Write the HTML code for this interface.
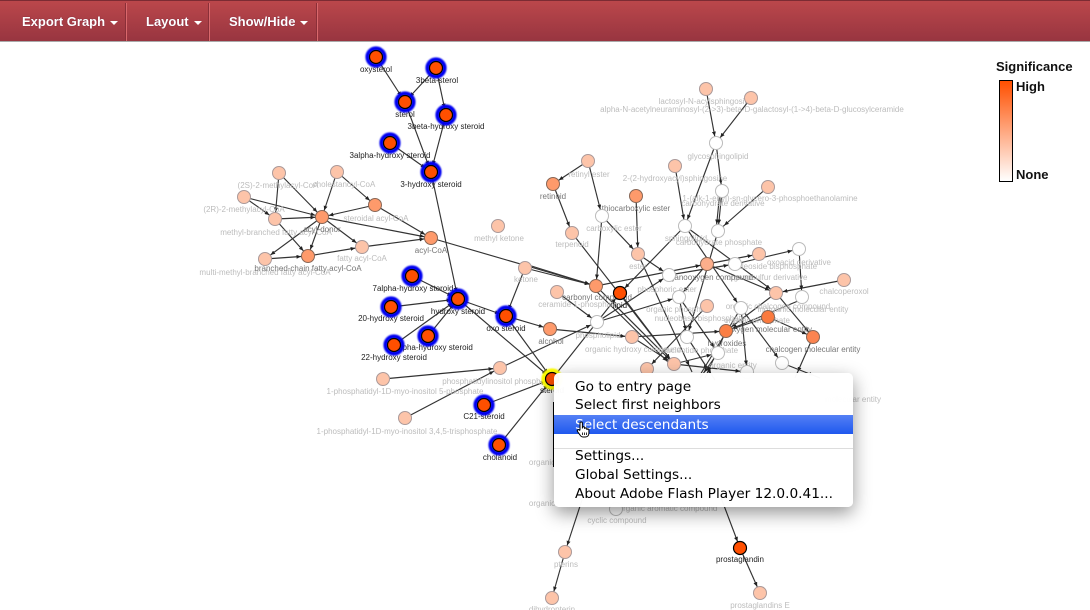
<!DOCTYPE html>
<html lang="en"><head><meta charset="utf-8"><title>Graph</title>
<style>
html,body{margin:0;padding:0;background:#fff;width:1090px;height:610px;overflow:hidden;font-family:"Liberation Sans",sans-serif}
#bar{position:absolute;left:0;top:0;width:1090px;background:linear-gradient(#bb474b,#983540);border-top:1px solid #7c2b33;border-bottom:1px solid #aaa;box-sizing:border-box;height:42px}
.sep{position:absolute;top:2px;height:38px;width:1px;background:#d9686c;box-shadow:-1px 0 0 #8a2f38}
.btn{position:absolute;top:13px;color:#fff;font-weight:bold;font-size:13px;line-height:15px;white-space:nowrap;text-shadow:0 0 1px rgba(60,0,60,.6)}
.car{display:inline-block;width:0;height:0;border-left:4.5px solid transparent;border-right:4.5px solid transparent;border-top:4px solid #fff;margin-left:5px;vertical-align:1px}
svg{position:absolute;left:0;top:0}
svg text{font-family:"Liberation Sans",sans-serif;font-size:8px;text-anchor:middle}
.l text{fill:#bcbcbc}.m text{fill:#777}.d text{fill:#222}
.e line{stroke:#333;stroke-width:1.15;marker-end:url(#a)}
.n circle{fill:#fdc4a9;stroke:#a99;stroke-width:1}
.w circle{fill:#fff;stroke:#bbb;stroke-width:1}
.o circle{fill:#fe9a6b;stroke:#865;stroke-width:1}
.b circle{fill:#ff4f00;stroke:#000;stroke-width:1.2}
.h circle{fill:none;stroke:#0000f0;stroke-width:4.2;filter:blur(.7px)}
#leg{position:absolute;left:999px;top:80px;width:12px;height:100px;border:1px solid #000;background:linear-gradient(#ff4f00,#fff)}
.lt{position:absolute;font-weight:bold;font-size:13px;line-height:15px;color:#111;white-space:nowrap}
#menu{position:absolute;left:554px;top:373px;width:299px;height:134px;background:rgba(255,255,255,.975);border-radius:5px;box-shadow:0 6px 18px rgba(0,0,0,.42);font-family:"DejaVu Sans",sans-serif;font-size:13.7px;color:#000}
#menu div.i{position:absolute;left:21px;white-space:nowrap;line-height:19px}
#hl{position:absolute;left:0;top:42px;width:299px;height:19px;background:linear-gradient(#5480f5,#1f58ee)}
#ln{position:absolute;left:0;top:75px;width:299px;height:1px;background:#ddd}
#blk{position:absolute;left:553px;top:402px;width:1px;height:65px;background:#000}
</style></head><body>
<svg width="1090" height="610" viewBox="0 0 1090 610">
<defs><marker id="a" markerWidth="5" markerHeight="4" refX="11.500" refY="2" orient="auto" markerUnits="userSpaceOnUse"><path d="M0 0L4.500 2L0 4z" fill="#222"/></marker></defs>
<g class="e">
<line x1="376" y1="57" x2="405" y2="102"/><line x1="436" y1="68" x2="405" y2="102"/><line x1="436" y1="68" x2="446" y2="115"/><line x1="446" y1="115" x2="431" y2="172"/><line x1="390" y1="143" x2="431" y2="172"/><line x1="405" y1="102" x2="431" y2="172"/><line x1="431" y1="172" x2="458" y2="299"/>
<line x1="412" y1="276" x2="458" y2="299"/><line x1="391" y1="307" x2="458" y2="299"/><line x1="394" y1="345" x2="458" y2="299"/><line x1="428" y1="336" x2="458" y2="299"/><line x1="458" y1="299" x2="506" y2="316"/><line x1="458" y1="299" x2="552" y2="379"/><line x1="506" y1="316" x2="552" y2="379"/><line x1="506" y1="316" x2="550" y2="329"/><line x1="484" y1="405" x2="552" y2="379"/><line x1="499" y1="445" x2="552" y2="379"/><line x1="552" y1="379" x2="620" y2="293"/><line x1="525" y1="268" x2="506" y2="316"/><line x1="550" y1="329" x2="632" y2="337"/>
<line x1="383" y1="379" x2="500" y2="368"/><line x1="405" y1="418" x2="500" y2="368"/><line x1="500" y1="368" x2="597" y2="322"/>
<line x1="279" y1="173" x2="275" y2="219"/><line x1="279" y1="173" x2="322" y2="217"/><line x1="337" y1="172" x2="322" y2="217"/><line x1="337" y1="172" x2="375" y2="205"/><line x1="244" y1="197" x2="322" y2="217"/><line x1="244" y1="197" x2="275" y2="219"/><line x1="275" y1="219" x2="322" y2="217"/><line x1="275" y1="219" x2="308" y2="256"/><line x1="375" y1="205" x2="322" y2="217"/><line x1="375" y1="205" x2="431" y2="238"/><line x1="322" y1="217" x2="431" y2="238"/><line x1="322" y1="217" x2="362" y2="247"/><line x1="322" y1="217" x2="308" y2="256"/><line x1="322" y1="217" x2="265" y2="259"/><line x1="265" y1="259" x2="308" y2="256"/><line x1="308" y1="256" x2="362" y2="247"/><line x1="362" y1="247" x2="431" y2="238"/>
<line x1="431" y1="238" x2="596" y2="286"/><line x1="525" y1="264" x2="596" y2="286"/><line x1="525" y1="268" x2="596" y2="286"/>
<line x1="706" y1="89" x2="716" y2="143"/><line x1="751" y1="98" x2="716" y2="143"/><line x1="716" y1="143" x2="685" y2="226"/><line x1="716" y1="143" x2="722" y2="191"/><line x1="675" y1="166" x2="685" y2="226"/><line x1="722" y1="191" x2="718" y2="231"/><line x1="720" y1="191" x2="716" y2="231"/><line x1="768" y1="187" x2="719" y2="230"/>
<line x1="588" y1="161" x2="553" y2="184"/><line x1="588" y1="161" x2="602" y2="216"/><line x1="553" y1="184" x2="572" y2="233"/><line x1="602" y1="216" x2="596" y2="286"/><line x1="602" y1="216" x2="638" y2="254"/><line x1="636" y1="196" x2="638" y2="254"/>
<line x1="572" y1="233" x2="674" y2="364"/><line x1="596" y1="286" x2="707" y2="264"/><line x1="596" y1="286" x2="674" y2="364"/><line x1="593" y1="288" x2="672" y2="366"/><line x1="620" y1="293" x2="674" y2="364"/><line x1="685" y1="226" x2="620" y2="293"/><line x1="557" y1="292" x2="597" y2="322"/><line x1="597" y1="322" x2="669" y2="275"/><line x1="597" y1="322" x2="679" y2="297"/><line x1="638" y1="254" x2="669" y2="275"/><line x1="638" y1="254" x2="692" y2="372"/><line x1="632" y1="337" x2="674" y2="364"/><line x1="632" y1="337" x2="726" y2="331"/>
<line x1="685" y1="226" x2="776" y2="293"/><line x1="685" y1="226" x2="741" y2="308"/><line x1="718" y1="231" x2="687" y2="337"/><line x1="707" y1="264" x2="776" y2="293"/><line x1="735" y1="264" x2="799" y2="249"/><line x1="707" y1="264" x2="759" y2="254"/><line x1="844" y1="280" x2="776" y2="293"/><line x1="799" y1="249" x2="802" y2="297"/><line x1="776" y1="293" x2="813" y2="337"/><line x1="776" y1="293" x2="726" y2="331"/><line x1="798" y1="301" x2="726" y2="331"/><line x1="768" y1="317" x2="726" y2="331"/><line x1="768" y1="317" x2="813" y2="337"/><line x1="741" y1="308" x2="782" y2="363"/><line x1="741" y1="308" x2="700" y2="375"/><line x1="679" y1="297" x2="687" y2="337"/><line x1="707" y1="306" x2="647" y2="369"/><line x1="679" y1="297" x2="718" y2="353"/><line x1="707" y1="264" x2="679" y2="297"/><line x1="669" y1="275" x2="735" y2="264"/><line x1="687" y1="337" x2="715" y2="380"/><line x1="674" y1="364" x2="718" y2="353"/><line x1="674" y1="364" x2="747" y2="372"/><line x1="813" y1="337" x2="795" y2="378"/><line x1="782" y1="363" x2="820" y2="378"/><line x1="741" y1="308" x2="747" y2="372"/><line x1="726" y1="331" x2="705" y2="378"/><line x1="718" y1="353" x2="700" y2="378"/>
<line x1="582" y1="500" x2="565" y2="552"/><line x1="565" y1="552" x2="552" y2="598"/><line x1="720" y1="495" x2="740" y2="548"/><line x1="740" y1="548" x2="760" y2="593"/>
</g>
<g class="l">
<text x="278" y="188">(2S)-2-methylacyl-CoA</text><text x="344" y="187">cholestanoyl-CoA</text><text x="244" y="212">(2R)-2-methylacyl-CoA</text><text x="276" y="235">methyl-branched fatty acyl-CoA</text><text x="265" y="275">multi-methyl-branched fatty acyl-CoA</text><text x="376" y="221">steroidal acyl-CoA</text><text x="362" y="261">fatty acyl-CoA</text>
<text x="405" y="394">1-phosphatidyl-1D-myo-inositol 5-phosphate</text><text x="407" y="434">1-phosphatidyl-1D-myo-inositol 3,4,5-trisphosphate</text><text x="497" y="384">phosphatidylinositol phosphate</text>
<text x="499" y="241">methyl ketone</text><text x="526" y="282">ketone</text><text x="578" y="307">ceramide 1-phosphate</text>
<text x="706" y="104">lactosyl-N-acylsphingosine</text><text x="752" y="112">alpha-N-acetylneuraminosyl-(2-&gt;3)-beta-D-galactosyl-(1-&gt;4)-beta-D-glucosylceramide</text><text x="718" y="159">glycosphingolipid</text><text x="675" y="181">2-(2-hydroxyacyl)sphingosine</text><text x="770" y="201">1-(alk-1-enyl)-sn-glycero-3-phosphoethanolamine</text><text x="723" y="206">carbohydrate derivative</text><text x="589" y="177">retinyl ester</text>
<text x="614" y="231">carboxylic ester</text><text x="572" y="247">terpenoid</text><text x="638" y="269">ester</text><text x="686" y="241">sphingolipid</text><text x="719" y="245">carbohydrate phosphate</text><text x="799" y="265">oxoacid derivative</text><text x="773" y="269">nucleoside bisphosphate</text><text x="767" y="280">organosulfur derivative</text><text x="667" y="292">phosphoric ester</text><text x="679" y="312">organic phosphate</text>
<text x="598" y="338">phospholipid</text><text x="633" y="352">organic hydroxy compound</text><text x="700" y="321">nucleobase bisphosphate</text><text x="757" y="323">organic phosphate</text>
<text x="700" y="353">nucleotide phosphate</text><text x="733" y="368">organic entity</text><text x="844" y="294">chalcoperoxol</text><text x="803" y="312">inorganic molecular entity</text><text x="853" y="402">molecular entity</text><text x="778" y="309">organic chalcogen compound</text>
<text x="542" y="465">organic</text><text x="542" y="506">organic</text><text x="617" y="523">cyclic compound</text><text x="668" y="511">organic aromatic compound</text><text x="566" y="567">pterins</text><text x="552" y="612">dihydropterin</text><text x="760" y="608">prostaglandins E</text>
</g>
<g class="m">
<text x="322" y="232">acyl-donor</text><text x="308" y="271">branched-chain fatty acyl-CoA</text><text x="431" y="253">acyl-CoA</text><text x="553" y="199">retinoid</text><text x="636" y="211">thiocarboxylic ester</text><text x="597" y="300">carbonyl compound</text><text x="551" y="344">alcohol</text><text x="708" y="280">organooxygen compound</text><text x="770" y="332">oxygen molecular entity</text><text x="727" y="346">hydroxides</text><text x="813" y="352">chalcogen molecular entity</text>
</g>
<g class="d">
<text x="376" y="72">oxysterol</text><text x="437" y="83">3beta-sterol</text><text x="405" y="117">sterol</text><text x="446" y="129">3beta-hydroxy steroid</text><text x="390" y="158">3alpha-hydroxy steroid</text><text x="431" y="187">3-hydroxy steroid</text><text x="413" y="291">7alpha-hydroxy steroid</text><text x="458" y="314">hydroxy steroid</text><text x="391" y="321">20-hydroxy steroid</text><text x="506" y="331">oxo steroid</text><text x="431" y="350">3-alpha-hydroxy steroid</text><text x="394" y="360">22-hydroxy steroid</text><text x="484" y="419">C21-steroid</text><text x="500" y="460">cholanoid</text><text x="620" y="308">lipid</text><text x="552" y="393">steroid</text><text x="740" y="562">prostaglandin</text>
</g>
<g class="n">
<circle cx="279" cy="173" r="6.5"/><circle cx="337" cy="172" r="6.5"/><circle cx="244" cy="197" r="6.5"/><circle cx="275" cy="219" r="6.5"/><circle cx="362" cy="247" r="6.5"/><circle cx="265" cy="259" r="6.5"/><circle cx="383" cy="379" r="6.5"/><circle cx="405" cy="418" r="6.5"/><circle cx="500" cy="368" r="6.5"/><circle cx="498" cy="226" r="6.5"/><circle cx="525" cy="268" r="6.5"/><circle cx="557" cy="292" r="6.5"/><circle cx="706" cy="89" r="6.5"/><circle cx="751" cy="98" r="6.5"/><circle cx="588" cy="161" r="6.5"/><circle cx="675" cy="166" r="6.5"/><circle cx="768" cy="187" r="6.5"/><circle cx="572" cy="233" r="6.5"/><circle cx="638" cy="254" r="6.5"/><circle cx="759" cy="254" r="6.5"/><circle cx="844" cy="280" r="6.5"/><circle cx="776" cy="293" r="6.5"/><circle cx="707" cy="306" r="6.5"/><circle cx="632" cy="337" r="6.5"/><circle cx="647" cy="369" r="6.5"/><circle cx="674" cy="364" r="6.5"/><circle cx="565" cy="552" r="6.5"/><circle cx="552" cy="598" r="6.5"/><circle cx="760" cy="593" r="6.5"/>
</g>
<g class="o">
<circle cx="322" cy="217" r="6.5"/><circle cx="375" cy="205" r="6.5"/><circle cx="431" cy="238" r="6.5"/><circle cx="308" cy="256" r="6.5"/><circle cx="553" cy="184" r="6.5"/><circle cx="636" cy="196" r="6.5"/><circle cx="596" cy="286" r="6.5"/><circle cx="550" cy="329" r="6.5"/><circle cx="707" cy="264" r="6.5" style="fill:#fcae8b"/><circle cx="768" cy="317" r="6.5" style="fill:#fb7a3e"/><circle cx="726" cy="331" r="6.5" style="fill:#fb7f45"/><circle cx="813" cy="337" r="6.5" style="fill:#fb8450"/>
</g>
<g class="w">
<circle cx="716" cy="143" r="6.5"/><circle cx="602" cy="216" r="6.5"/><circle cx="722" cy="191" r="6.5"/><circle cx="685" cy="226" r="6.5"/><circle cx="718" cy="231" r="6.5"/><circle cx="735" cy="264" r="6.5"/><circle cx="799" cy="249" r="6.5"/><circle cx="669" cy="275" r="6.5"/><circle cx="679" cy="297" r="6.5"/><circle cx="802" cy="297" r="6.5"/><circle cx="741" cy="308" r="6.5"/><circle cx="597" cy="322" r="6.5"/><circle cx="687" cy="337" r="6.5"/><circle cx="718" cy="353" r="6.5"/><circle cx="782" cy="363" r="6.5"/><circle cx="747" cy="372" r="6.5"/><circle cx="616" cy="509" r="6.5"/>
</g>
<g class="h">
<circle cx="376" cy="57" r="8.5"/><circle cx="436" cy="68" r="8.5"/><circle cx="405" cy="102" r="8.5"/><circle cx="446" cy="115" r="8.5"/><circle cx="390" cy="143" r="8.5"/><circle cx="431" cy="172" r="8.5"/><circle cx="412" cy="276" r="8.5"/><circle cx="458" cy="299" r="8.5"/><circle cx="391" cy="307" r="8.5"/><circle cx="506" cy="316" r="8.5"/><circle cx="428" cy="336" r="8.5"/><circle cx="394" cy="345" r="8.5"/><circle cx="484" cy="405" r="8.5"/><circle cx="499" cy="445" r="8.5"/>
<circle cx="552" cy="379" r="8.5" style="stroke:#ffff00"/>
</g>
<g class="b">
<circle cx="376" cy="57" r="6.5"/><circle cx="436" cy="68" r="6.5"/><circle cx="405" cy="102" r="6.5"/><circle cx="446" cy="115" r="6.5"/><circle cx="390" cy="143" r="6.5"/><circle cx="431" cy="172" r="6.5"/><circle cx="412" cy="276" r="6.5"/><circle cx="458" cy="299" r="6.5"/><circle cx="391" cy="307" r="6.5"/><circle cx="506" cy="316" r="6.5"/><circle cx="428" cy="336" r="6.5"/><circle cx="394" cy="345" r="6.5"/><circle cx="484" cy="405" r="6.5"/><circle cx="499" cy="445" r="6.5"/><circle cx="552" cy="379" r="6.5"/><circle cx="620" cy="293" r="6.5"/><circle cx="740" cy="548" r="6.5"/>
</g>
</svg>
<div id="bar">
<div class="btn" style="left:22px">Export Graph<span class="car"></span></div>
<div class="sep" style="left:126px"></div>
<div class="btn" style="left:146px">Layout<span class="car"></span></div>
<div class="sep" style="left:209px"></div>
<div class="btn" style="left:229px">Show/Hide<span class="car"></span></div>
<div class="sep" style="left:317px"></div>
</div>
<div class="lt" style="left:996px;top:59px">Significance</div>
<div id="leg"></div>
<div class="lt" style="left:1016px;top:79px">High</div>
<div class="lt" style="left:1016px;top:167px">None</div>
<div id="blk"></div>
<div id="menu">
<div id="hl"></div><div id="ln"></div>
<div class="i" style="top:5px">Go to entry page</div>
<div class="i" style="top:23px">Select first neighbors</div>
<div class="i" style="top:43px;color:#fff">Select descendants</div>
<div class="i" style="top:74px">Settings...</div>
<div class="i" style="top:93px">Global Settings...</div>
<div class="i" style="top:112px">About Adobe Flash Player 12.0.0.41...</div>
<svg style="left:21px;top:47px" width="16" height="20" viewBox="0 0 16 20"><path d="M5 10V3.2a1.2 1.2 0 0 1 2.4 0V8.500V7.600a1.2 1.2 0 0 1 2.300 0V9a1.100 1.100 0 0 1 2.200 0V10a1 1 0 0 1 2 0V13c0 2.500-1.500 4-3.500 4H8c-1.500 0-2.500-1-3.200-2.300L2.500 11.500c-.8-1.500 1-2.500 2-1.200z" fill="#fff" stroke="#000" stroke-width="1"/><path d="M7.500 12.500V15M9.500 12.500V15M11.500 12.500V15" stroke="#000" stroke-width=".8"/></svg>
</div>
</body></html>
